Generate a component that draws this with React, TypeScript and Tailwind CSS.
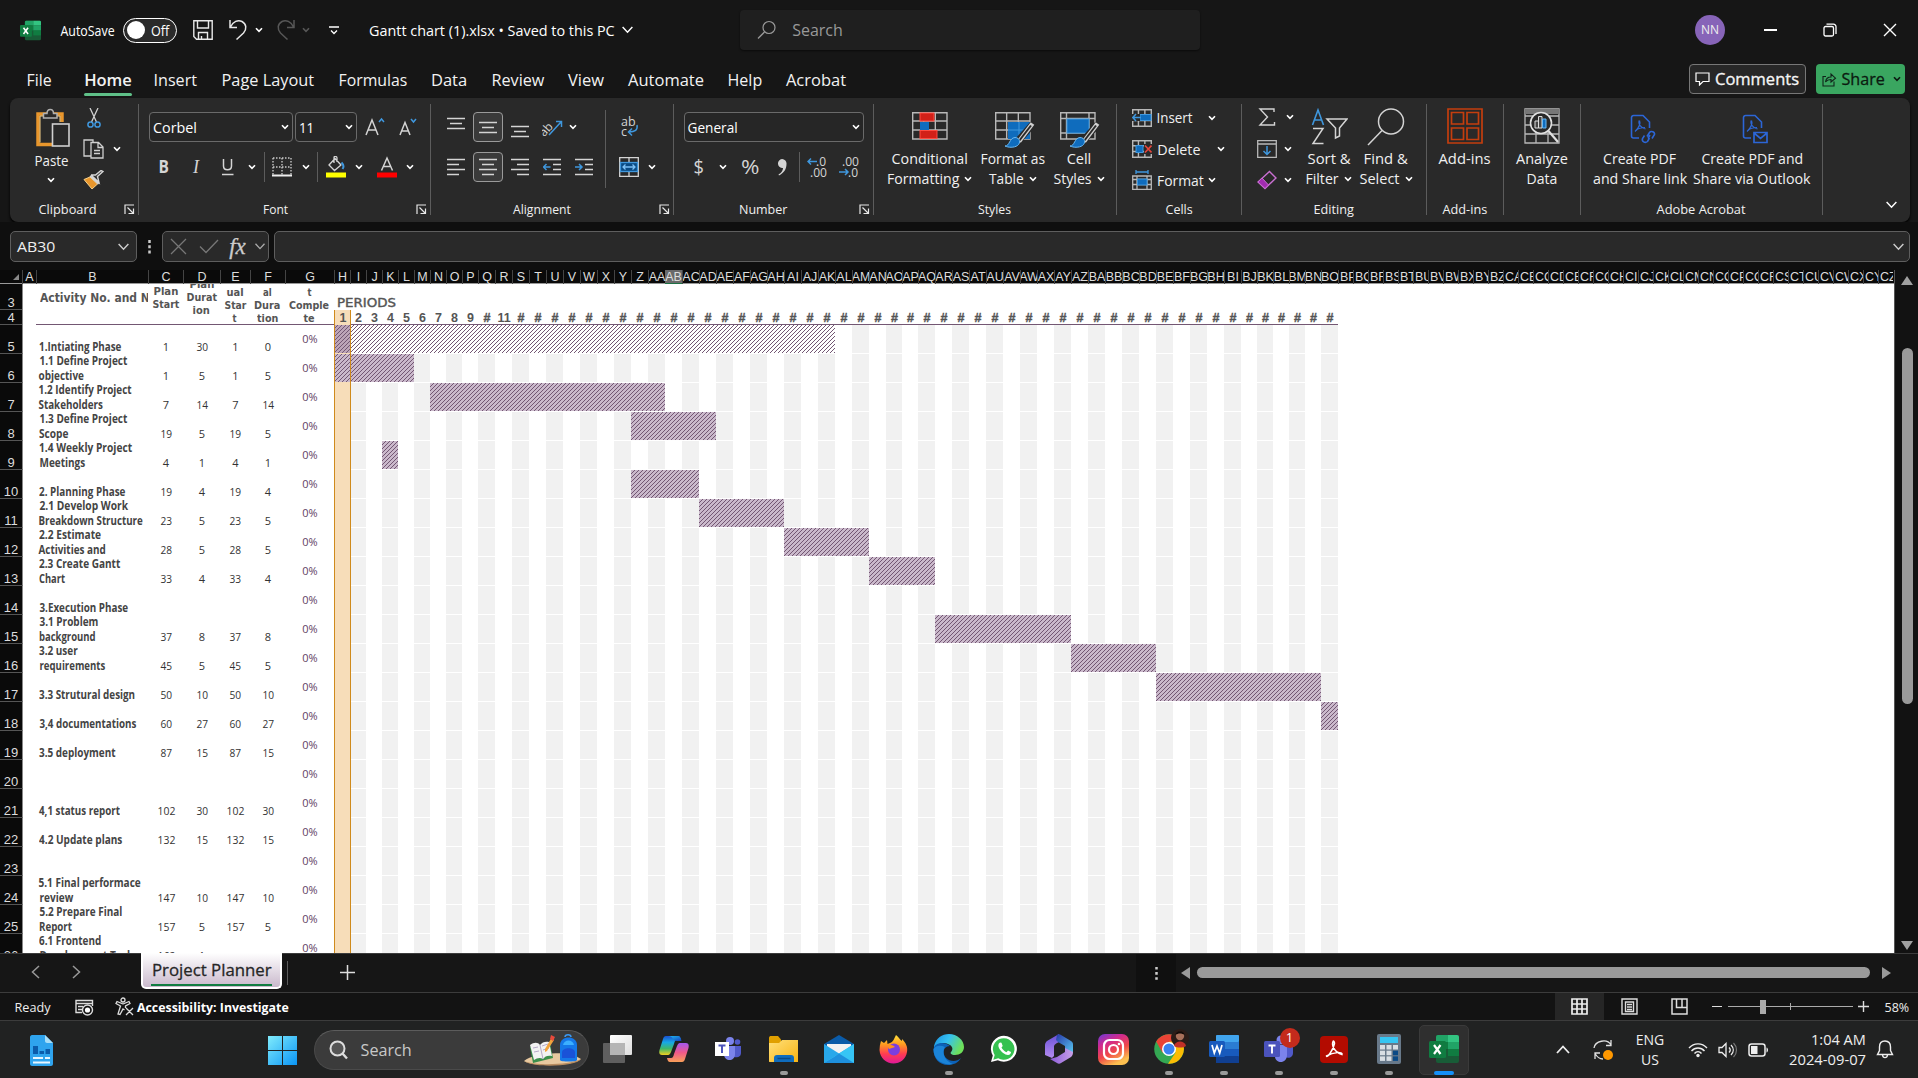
import React, { useLayoutEffect, useRef, useState, type ReactNode } from "react";

/* Text condensed or widened to a fixed advance width. */
function Fit({ w, children, className = "" }: { w: number; children: string; className?: string }) {
  const ref = useRef<HTMLSpanElement>(null);
  const [scale, setScale] = useState(1);
  useLayoutEffect(() => {
    if (ref.current) setScale(w / ref.current.offsetWidth);
  }, [w, children]);
  return (
    <span className={"inline-flex shrink-0 justify-center whitespace-pre " + className} style={{ width: w }}>
      <span ref={ref} className="inline-block shrink-0" style={{ transform: `scaleX(${scale})` }}>
        {children}
      </span>
    </span>
  );
}

function Svg({ w, h, vb, children, className = "" }: { w: number; h: number; vb?: string; children: ReactNode; className?: string }) {
  return (
    <svg width={w} height={h} viewBox={vb ?? `0 0 ${w} ${h}`} fill="none" className={"block shrink-0 " + className}>
      {children}
    </svg>
  );
}

const Chev = ({ c = "#fff", w = 8 }: { c?: string; w?: number }) => (
  <Svg w={w} h={(w * 6) / 8} vb="0 0 8 6">
    <path d="M1 1.2 4 4.4 7 1.2" stroke={c} strokeWidth={w > 8 ? 0.9 : 1.6} />
  </Svg>
);

const Sep = ({ className = "" }: { className?: string }) => <div className={"w-px shrink-0 bg-[#5c5c5c] " + className} />;
const Box = ({ className = "", children }: { className?: string; children?: ReactNode }) => (
  <div className={"flex shrink-0 items-center justify-center " + className}>{children}</div>
);

const Lines = ({ l, w = 18, c = "#d4d4d4" }: { l: [number, number][]; w?: number; c?: string }) => (
  <Svg w={w} h={l.length > 3 ? 18 : 13}>
    {l.map(([a, b], i) => (
      <path key={i} d={`M${a} ${i * 5 + 1.5}H${b}`} stroke={c} strokeWidth="1.4" />
    ))}
  </Svg>
);

const Launcher = () => (
  <Svg w={11} h={11}>
    <path d="M1 10V1H10M3.5 3.5 9 9M9.5 4.5V9.5H4.5" stroke="#e8e8e8" strokeWidth="1.2" />
  </Svg>
);

function ExcelLogo({ w, h }: { w: number; h: number }) {
  return (
    <Svg w={w} h={h} vb="0 0 30 30">
      <rect x="7" y="1" width="23" height="28" rx="2" fill="#185c37" />
      <path d="M9 1h10v7H7V3a2 2 0 0 1 2-2z" fill="#21a366" />
      <path d="M19 1h9a2 2 0 0 1 2 2v5H19z" fill="#33c481" />
      <rect x="7" y="8" width="12" height="7" fill="#107c41" />
      <rect x="19" y="8" width="11" height="7" fill="#21a366" />
      <rect x="19" y="15" width="11" height="7" fill="#107c41" />
      <rect x="0" y="7" width="17" height="17" rx="1.5" fill="#107c41" />
      <path d="M5 11l6.500 9M11.500 11 5 20" stroke="#fff" strokeWidth="2.200" />
    </Svg>
  );
}

/* ---------- Title bar and tabs ---------- */

function TitleBar() {
  return (
    <div className="flex h-[60px] shrink-0 items-center bg-[#161616] pl-5 text-[14px] text-white">
      <ExcelLogo w={21} h={21} />
      <div className="w-5" />
      <Fit w={54} className="text-[14px]">AutoSave</Fit>
      <div className="ml-2 flex h-[25px] w-[54px] items-center rounded-full border border-white bg-[#2a2a2a] pl-[3px]">
        <div className="h-[18px] w-[18px] rounded-full bg-white" />
        <Fit w={18} className="ml-[6px] text-[14px]">Off</Fit>
      </div>
      <Svg w={20} h={20} className="ml-[16px]">
        <path d="M.8.8H19.2V19.2H3.500L.8 16.500zM4.500 1V8H15.500V1M5.500 19V12.500H14.500V19M8.500 19V16" stroke="#e8e8e8" strokeWidth="1.400" />
      </Svg>
      <Svg w={20} h={22} className="ml-[15px]">
        <path d="M2 1V8.500H9M2.500 8C5 2.500 10 .5 14 2.500 18.500 5 19 10 15.500 14L8.500 20.500" stroke="#e8e8e8" strokeWidth="1.500" />
      </Svg>
      <Box className="ml-[3px] w-4"><Chev /></Box>
      <Svg w={20} h={22} className="ml-[9px]">
        <path d="M18 1V8.500H11M17.500 8C15 2.500 10 .5 6 2.500 1.500 5 1 10 4.500 14L11.500 20.500" stroke="#575757" strokeWidth="1.500" />
      </Svg>
      <Box className="ml-[2px] w-4"><Chev c="#575757" /></Box>
      <Box className="ml-[8px] w-6">
        <Svg w={10} h={9}><path d="M0 1H10M2 4.500 5 7.500 8 4.500" stroke="#fff" strokeWidth="1.300" /></Svg>
      </Box>
      <Fit w={246} className="ml-[23px] pt-[2px] text-[14.500px]">Gantt chart (1).xlsx • Saved to this PC</Fit>
      <Box className="ml-1 w-4"><Chev w={13} /></Box>
      <div className="ml-[105px] flex h-10 w-[460px] items-center rounded-[4px] bg-[#1f1f1f] pl-[17px] shadow-[0_1px_2px_#0008]">
        <Svg w={19} h={20}>
          <circle cx="12" cy="7.500" r="6" stroke="#9a9a9a" strokeWidth="1.200" />
          <path d="M7.500 12 1 18.500" stroke="#9a9a9a" strokeWidth="1.300" />
        </Svg>
        <Fit w={51} className="ml-[16px] text-[16px] text-[#999]">Search</Fit>
      </div>
      <div className="grow" />
      <Box className="h-[30px] w-[30px] rounded-full bg-[#8764b8] text-[12px] text-[#eee]">
        <Fit w={18}>NN</Fit>
      </Box>
      <Box className="ml-[15px] w-[60px]"><div className="h-[1.500px] w-[13px] bg-white" /></Box>
      <Box className="w-[60px]">
        <Svg w={14} h={14}>
          <rect x="1" y="3.500" width="9.500" height="9.500" rx="1.500" stroke="#fff" strokeWidth="1.300" />
          <path d="M3.500 1.200H10.500a2.500 2.500 0 0 1 2.500 2.500V11" stroke="#fff" strokeWidth="1.300" />
        </Svg>
      </Box>
      <Box className="mr-[-2px] w-[60px]">
        <Svg w={14} h={14}><path d="M1 1 13 13M13 1 1 13" stroke="#fff" strokeWidth="1.400" /></Svg>
      </Box>
    </div>
  );
}

/* label, width, gap before it */
const tabs: [string, number, number][] = [
  ["File", 25, 27], ["Home", 48, 32], ["Insert", 43, 22], ["Page Layout", 93, 24], ["Formulas", 69, 24],
  ["Data", 36, 24], ["Review", 53, 24], ["View", 36, 24], ["Automate", 76, 24], ["Help", 35, 23], ["Acrobat", 60, 24],
];

function TabBar() {
  return (
    <div className="flex h-[38px] shrink-0 bg-[#161616] text-[16.500px] text-[#f2f2f2]">
      {tabs.map(([t, w, g]) => (
        <div key={t} className="flex h-[36px] flex-col justify-between pt-[8px]" style={{ marginLeft: g }}>
          <Fit w={w} className={"leading-[24px] " + (t === "Home" ? "font-semibold" : "")}>{t}</Fit>
          {t === "Home" && <div className="h-[3px] rounded-full bg-[#5fc088]" />}
        </div>
      ))}
      <div className="grow" />
      <div className="mt-[4px] flex h-[30px] w-[117px] items-center rounded-[4px] border border-[#777] bg-[#272727] pl-[5px]">
        <Svg w={15} h={14}><path d="M1 1H14V9.500H8L4.500 13V9.500H1z" stroke="#fff" strokeWidth="1.200" /></Svg>
        <Fit w={84} className="ml-[5px] text-[16.500px] [-webkit-text-stroke:0.3px_#fff]">Comments</Fit>
      </div>
      <div className="mr-[13px] ml-[10px] mt-[4px] flex h-[30px] w-[89px] items-center rounded-[4px] bg-[#3aa660] pl-[6px] text-[#0b1a10]">
        <Svg w={15} h={15}>
          <path d="M4 4.500H1V14H12V9.500M3.500 10C4 6.500 6.500 5 9 5V2L13.500 6.200 9 10V7.500C7 7.500 5 8 3.500 10z" stroke="#10241a" strokeWidth="1.100" />
        </Svg>
        <Fit w={43} className="ml-[5px] text-[16.500px] [-webkit-text-stroke:0.3px_#0b1a10]">Share</Fit>
        <Box className="ml-[6px] w-3"><Chev c="#0b1a10" /></Box>
      </div>
    </div>
  );
}

/* ---------- Ribbon ---------- */

function Group({ className, label, lw, launcher, tail = "", children }: { className: string; label?: string; lw?: number; launcher?: boolean; tail?: string; children: ReactNode }) {
  return (
    <div className={"flex shrink-0 flex-col " + className}>
      <div className="flex h-[98px] shrink-0">{children}</div>
      <div className={"flex h-[27px] items-center " + tail}>
        <div className="grow" />
        {label && <Fit w={lw ?? 40} className="pt-[2px] text-[13px] text-[#f0f0f0]">{label}</Fit>}
        <div className="grow" />
        {launcher && <Launcher />}
      </div>
    </div>
  );
}

const GSep = () => <Sep className="mt-[6px] h-[111px]" />;

function Big({ className, icon, a, aw, b, bw, chev }: { className: string; icon: ReactNode; a: string; aw: number; b?: string; bw?: number; chev?: boolean }) {
  return (
    <div className={"flex shrink-0 flex-col items-center pt-[10px] text-[14.500px] leading-[20px] text-[#f0f0f0] " + className}>
      <Box className="h-[38px]">{icon}</Box>
      <Fit w={aw} className="mt-[3px]">{a}</Fit>
      {b && (
        <div className="flex items-center gap-[5px]">
          <Fit w={bw ?? 30}>{b}</Fit>
          {chev && <Chev />}
        </div>
      )}
    </div>
  );
}

const Brush = () => (
  <>
    <path d="M38 12 23 29" stroke="#292929" strokeWidth="7" />
    <path d="M37.500 11.500 24 29.500" stroke="#d0d0d0" strokeWidth="4.500" />
    <path d="M36 13.500 24 29" stroke="#292929" strokeWidth="2" />
    <path d="M10 34C15 34 14 26 20 25.500 25 25.500 26 31 22.500 33.500 19 36 13 35.500 10 34z" fill="#0f6cbd" stroke="#6cb8f0" strokeWidth="1" />
  </>
);
const GridLines = ({ w, h }: { w: number; h: number }) => (
  <path
    d={`M.7.700H${w}V${h}H.700zM.7 ${h / 3}H${w}M.7 ${(h * 2) / 3}H${w}M${w / 3} .7V${h}M${(w * 2) / 3} .7V${h}`}
    stroke="#b8b8b8"
    strokeWidth="1.400"
  />
);

function CellRow({ icon, t, w, gap }: { icon: ReactNode; t: string; w: number; gap: string }) {
  return (
    <div className="flex h-8 items-center">
      {icon}
      <Fit w={w} className="ml-[5px] pt-px text-[14.500px] text-[#f0f0f0]">{t}</Fit>
      <Box className={gap}><Chev /></Box>
    </div>
  );
}

function PdfIcon({ link }: { link: boolean }) {
  return (
    <Svg w={26} h={30}>
      <path d="M9 24H3.500a2 2 0 0 1-2-2V3.500a2 2 0 0 1 2-2H13L19.500 8V14" stroke="#2c66d6" strokeWidth="1.600" />
      <path d="M9 6.500C8.500 10 9 12.500 15.500 15M9.500 6.500C11 10 8 14.500 5 17.500M6 16.500C8 14.500 12 13.500 15 13.500" stroke="#2c66d6" strokeWidth="1.200" />
      {link ? (
        <path d="M17 22.500 19.500 18.500C21 16.500 25 18 24.500 20.500L22 24.500M20 21 18 24.500M14.500 21.500 12.500 24.500C11.500 27.500 15 29.500 17.500 27.500L19.500 24" stroke="#2c66d6" strokeWidth="1.600" />
      ) : (
        <path d="M12 18.500H25V28.500H12zM12 19 18.500 24.500 25 19" stroke="#2c66d6" strokeWidth="1.700" />
      )}
    </Svg>
  );
}

const selectBox = "flex h-[30px] shrink-0 items-center rounded-[4px] border border-[#6a6a6a] bg-[#262626] text-[15px] text-white";

function Ribbon() {
  const left: [number, number][] = [[0, 18], [0, 12], [0, 18], [0, 12]];
  const center: [number, number][] = [[0, 18], [3, 15], [0, 18], [3, 15]];
  const right: [number, number][] = [[0, 18], [6, 18], [0, 18], [6, 18]];
  return (
    <div className="flex h-[124px] shrink-0 bg-[#161616] px-[10px] pr-[8px]">
      <div className="flex w-[1900px] overflow-hidden rounded-[8px] bg-[#292929] shadow-[0_2px_3px_#000]">
        <Group className="w-[128px]" label="Clipboard" lw={58} launcher tail="pr-[3px]">
          <div className="flex w-[68px] flex-col items-center pl-[14px] pt-[9px]">
            <Svg w={36} h={40} className="ml-[4px]">
              <path d="M17 37.500H3V7H27V15" stroke="#e8962c" strokeWidth="3.500" />
              <path d="M5 35.500V9H25V15" stroke="#f7d28a" strokeWidth="1" />
              <path d="M8.500 11V6.500H12C12 1 18.500 1 18.500 6.500H22V11z" fill="#292929" stroke="#b0b0b0" strokeWidth="1.500" />
              <rect x="17.500" y="17" width="16.500" height="22" fill="#292929" stroke="#d0d0d0" strokeWidth="1.600" />
            </Svg>
            <Fit w={34} className="mt-[4px] text-[14.500px] leading-[20px] text-[#f0f0f0]">Paste</Fit>
            <div className="mt-[6px]"><Chev /></div>
          </div>
          <div className="flex flex-col pt-[4px] pl-[5px]">
            <div className="flex h-8 items-center pt-[1px] pl-[4px]">
              <Svg w={14} h={21}>
                <path d="M3 0 9.500 14M11 0 4.500 14" stroke="#d0d0d0" strokeWidth="1.300" />
                <circle cx="3.500" cy="16.500" r="2.600" stroke="#3f97dd" strokeWidth="1.500" />
                <circle cx="10.500" cy="16.500" r="2.600" stroke="#3f97dd" strokeWidth="1.500" />
              </Svg>
            </div>
            <div className="flex h-8 items-center gap-[9px]">
              <Svg w={21} h={20}>
                <path d="M8 17H1V1H10V3" stroke="#d0d0d0" strokeWidth="1.300" />
                <path d="M8 3.500H15.500L20 8V19H8zM15 3.500V8.500H20M11 11.500H17M11 14.500H17" stroke="#d0d0d0" strokeWidth="1.300" />
              </Svg>
              <Chev />
            </div>
            <div className="flex h-8 items-center">
              <Svg w={21} h={20}>
                <path d="M1 9.500 9 19 14.500 14 7 7z" fill="#e8962c" stroke="#f7d28a" />
                <path d="M7 6 15.500 14M8 5 16 12.500 14.500 6.500 20 1.500 18 .500 12.500 5 8 5" stroke="#d6d6d6" strokeWidth="1.400" fill="#333" />
              </Svg>
            </div>
          </div>
        </Group>
        <GSep />
        <Group className="w-[291px]" label="Font" lw={25} launcher tail="-ml-[3px] pr-[3px]">
          <div className="flex flex-col gap-[10px] pl-[10px] pt-[14px]">
            <div className="flex items-center">
              <div className={selectBox + " w-[144px] justify-between pl-[3px] pr-[3px]"}><Fit w={44}>Corbel</Fit><Chev /></div>
              <div className={selectBox + " ml-[2px] w-[62px] justify-between pl-[3px] pr-[3px]"}><Fit w={15}>11</Fit><Chev /></div>
              <Svg w={20} h={20} className="ml-[8px]">
                <path d="M1 18 7 3 13 18M3 13H11" stroke="#d4d4d4" strokeWidth="1.500" />
                <path d="M14 5 16.500 2 19 5" stroke="#3f97dd" strokeWidth="1.500" />
              </Svg>
              <Svg w={18} h={20} className="ml-[14px]">
                <path d="M1 18 6 5.500 11 18M3 14H9" stroke="#d4d4d4" strokeWidth="1.500" />
                <path d="M12 2 14.500 5 17 2" stroke="#3f97dd" strokeWidth="1.500" />
              </Svg>
            </div>
            <div className="-ml-px flex h-[30px] items-center text-[17px] text-[#d4d4d4]">
              <Box className="w-8 font-bold"><Fit w={10}>B</Fit></Box>
              <Box className="w-8 font-['Liberation_Serif'] text-[18px] italic">I</Box>
              <Box className="w-[30px]">
                <Svg w={13} h={18}><path d="M2.500 1V8C2.500 13 10.500 13 10.500 8V1M1 16.500H12.500" stroke="#d4d4d4" strokeWidth="1.500" /></Svg>
              </Box>
              <Box className="w-5"><Chev /></Box>
              <Sep className="mx-[2px] h-[30px]" />
              <Box className="ml-[3px] w-6">
                <Svg w={20} h={20}>
                  <path d="M1 1H19M1 10H19M1 1V18M10 1V18M19 1V18" stroke="#c8c8c8" strokeWidth="1.400" strokeDasharray="1.500 1.500" />
                  <path d="M0 18.500H20" stroke="#eee" strokeWidth="2" />
                </Svg>
              </Box>
              <Box className="w-[23px]"><Chev /></Box>
              <Sep className="h-[30px]" />
              <Box className="ml-[6px] w-6">
                <Svg w={20} h={22}>
                  <path d="M3 9 9 2.500 15 9 8.500 14.500zM8 7V1.500C8 0 11 0 11 2V6" stroke="#d4d4d4" strokeWidth="1.300" />
                  <path d="M15.500 6.500C18 9 18 11 16.500 13" stroke="#3f97dd" strokeWidth="2" />
                  <rect y="16.500" width="20" height="5" fill="#ff0" />
                </Svg>
              </Box>
              <Box className="w-[22px]"><Chev /></Box>
              <Box className="ml-[5px] w-6">
                <Svg w={20} h={22}>
                  <path d="M4.500 14.500 10 2 15.500 14.500M6.500 10.500H13.500" stroke="#d4d4d4" strokeWidth="1.500" />
                  <rect y="16.500" width="20" height="5" fill="#f00" />
                </Svg>
              </Box>
              <Box className="w-[22px]"><Chev /></Box>
            </div>
          </div>
        </Group>
        <GSep />
        <Group className="w-[242px]" label="Alignment" lw={58} launcher tail="-ml-[6px] pr-[3px]">
          <div className="flex w-[174px] shrink-0 flex-col gap-[10px] pl-[9px] pt-[14px]">
            <div className="flex h-[30px] items-center">
              <Box className="w-8 pb-[8px]"><Lines l={[[0, 18], [3, 15], [0, 18]]} /></Box>
              <Box className="ml-[1px] h-[30px] w-[30px] rounded-[4px] border border-[#9a9a9a] bg-[#3a3a3a]"><Lines l={[[0, 18], [3, 15], [0, 18]]} /></Box>
              <Box className="ml-[2px] w-[29px] pt-[8px]"><Lines l={[[0, 18], [3, 15], [0, 18]]} /></Box>
              <Box className="ml-[2px] w-[32px] pb-[2px]">
                <Svg w={21} h={20}>
                  <text x="-5" y="13" transform="rotate(-48 8 9)" fontSize="12" fill="#d4d4d4" fontFamily="Open Sans">ab</text>
                  <path d="M7 19 19 6M14 5.500H19.500V11" stroke="#3f97dd" strokeWidth="1.500" />
                </Svg>
              </Box>
              <Box className="-ml-[3px] w-4"><Chev /></Box>
            </div>
            <div className="flex h-[30px] items-center">
              <Box className="w-8"><Lines l={left} /></Box>
              <Box className="ml-[1px] h-[30px] w-[30px] rounded-[4px] border border-[#9a9a9a] bg-[#3a3a3a]"><Lines l={center} /></Box>
              <Box className="ml-[2px] w-[29px]"><Lines l={right} /></Box>
              {[0, 1].map((k) => (
                <Box key={k} className={k ? "w-8" : "ml-[2px] w-8"}>
                  <Svg w={18} h={18}>
                    <path d="M0 1.500H18M10 6.500H18M10 11.500H18M0 16.500H18" stroke="#d4d4d4" strokeWidth="1.400" />
                    <path d={k ? "M0 9H7M4 6 7 9 4 12" : "M7.500 9H.500M3.500 6 .5 9 3.500 12"} stroke="#3f97dd" strokeWidth="1.500" />
                  </Svg>
                </Box>
              ))}
            </div>
          </div>
          <Sep className="mt-[12px] h-[78px]" />
          <div className="flex flex-col gap-[10px] pl-[13px] pt-[14px]">
            <Box className="h-[30px] w-[22px]">
              <Svg w={20} h={22}>
                <text x="1" y="10" fontSize="12.500" fill="#d4d4d4" fontFamily="Open Sans">ab</text>
                <text x="1" y="20" fontSize="12.500" fill="#d4d4d4" fontFamily="Open Sans">c</text>
                <path d="M17 9C18 14 15 16 9 16M12 12.500 8.500 16 12 19.500" stroke="#3f97dd" strokeWidth="1.500" />
              </Svg>
            </Box>
            <div className="flex h-[30px] items-center">
              <Svg w={20} h={20}>
                <path d="M.7.700H19.300V19.300H.700zM10 1V5M10 15V19" stroke="#d4d4d4" strokeWidth="1.300" />
                <rect x="1.500" y="5.500" width="17" height="9" fill="#0a4b84" stroke="#3f97dd" strokeWidth="1.300" />
                <path d="M4 10H16M6.500 7.500 4 10 6.500 12.500M13.500 7.500 16 10 13.500 12.500" stroke="#7cc0f5" strokeWidth="1.300" />
              </Svg>
              <Box className="ml-[3px] w-5"><Chev /></Box>
            </div>
          </div>
        </Group>
        <GSep />
        <Group className="w-[199px]" label="Number" lw={48} launcher tail="-ml-[6px] pr-[3px]">
          <div className="flex flex-col gap-[10px] pl-[10px] pt-[14px]">
            <div className={selectBox + " w-[180px] justify-between pl-[3px] pr-[3px]"}><Fit w={50}>General</Fit><Chev /></div>
            <div className="flex h-[30px] items-center text-[20px] text-[#d4d4d4]">
              <Box className="w-[30px]"><Fit w={10}>$</Fit></Box>
              <Box className="w-[18px]"><Chev /></Box>
              <Box className="ml-[3px] w-[30px]"><Fit w={19}>%</Fit></Box>
              <Box className="ml-[2px] w-[30px]">
                <Svg w={10} h={17}><path d="M5 0A4.500 4.500 0 0 1 9.500 5C9.500 10 7 14 2 16.500L1.500 15.500C5 13.500 6 11 6 9A4.500 4.500 0 1 1 5 0z" fill="#d4d4d4" /></Svg>
              </Box>
              <Sep className="ml-[2px] h-[30px]" />
              {[0, 1].map((k) => (
                <Box key={k} className={k ? "ml-[6px] w-[26px]" : "ml-[4px] w-[26px]"}>
                  <Svg w={20} h={22}>
                    <text x={k ? 3 : 9} y="9.500" fontSize="12.500" fill="#d4d4d4" fontFamily="Open Sans" textLength={k ? 17 : 10} lengthAdjust="spacingAndGlyphs">{k ? ".00" : ".0"}</text>
                    <text x={k ? 9 : 3} y="21" fontSize="12.500" fill="#d4d4d4" fontFamily="Open Sans" textLength={k ? 10 : 17} lengthAdjust="spacingAndGlyphs">{k ? ".0" : ".00"}</text>
                    <path d={k ? "M0 16H9M6 13 9 16 6 19" : "M10 5.500H1M4 2.500 1 5.500 4 8.500"} stroke="#3f97dd" strokeWidth="1.500" />
                  </Svg>
                </Box>
              ))}
            </div>
          </div>
        </Group>
        <GSep />
        <Group className="w-[242px]" label="Styles" lw={33}>
          <Big className="ml-[12px] w-[87px]" a="Conditional" aw={76} b="Formatting" bw={72} chev icon={
            <Svg w={36} h={28} className="mb-[2px] ml-px">
              <GridLines w={35} h={27} />
              <rect x="8" y="1" width="14" height="8" fill="#d22018" stroke="#ff4b40" />
              <rect x="8" y="10" width="9" height="8" fill="#0f6cbd" />
              <rect x="8" y="18.500" width="17" height="8" fill="#d22018" stroke="#ff4b40" />
            </Svg>} />
          <Big className="ml-[3px] w-[74px]" a="Format as" aw={65} b="Table" bw={35} chev icon={
            <Svg w={42} h={36} className="mt-[5px] ml-[6px]">
              <GridLines w={35} h={27} />
              <rect x="13" y="10" width="22" height="17" fill="#0f6cbd" />
              <path d="M13 18H35M24 10V27" stroke="#3f97dd" />
              <Brush />
            </Svg>} />
          <Big className="ml-[2px] w-[54px]" a="Cell" aw={25} b="Styles" bw={38} chev icon={
            <Svg w={42} h={36} className="mt-[5px] ml-[4px]">
              <path d="M.7.700H35V27H.700zM.7 6.500H35M.7 21H35M6.500 .7V27M29 .7V27" stroke="#b8b8b8" strokeWidth="1.400" />
              <rect x="7" y="7" width="22" height="14" fill="#0f6cbd" stroke="#3f97dd" />
              <Brush />
            </Svg>} />
        </Group>
        <GSep />
        <Group className="w-[124px]" label="Cells" lw={27}>
          <div className="flex flex-col pl-[15px] pt-[4px]">
            <CellRow t="Insert" w={36} gap="ml-[11px] w-4" icon={
              <Svg w={20} h={18}>
                <GridLines w={19.300} h={17.300} />
                <rect x="8" y="5.500" width="11" height="6" fill="#0f6cbd" stroke="#3f97dd" />
                <rect x="0" y="5" width="8" height="7" fill="#292929" />
                <path d="M9 8.500H1M4 5 .8 8.500 4 12" stroke="#3f97dd" strokeWidth="1.500" />
              </Svg>} />
            <CellRow t="Delete" w={43.500} gap="ml-[12px] w-4" icon={
              <Svg w={20} h={18}>
                <GridLines w={19.300} h={17.300} />
                <rect x="12" y="4" width="8" height="10" fill="#292929" />
                <rect x="4" y="5.500" width="7" height="7" fill="#0f6cbd" stroke="#3f97dd" />
                <path d="M13 5.500 19.500 12.500M19.500 5.500 13 12.500" stroke="#e8453c" strokeWidth="1.600" />
              </Svg>} />
            <CellRow t="Format" w={47} gap="w-4" icon={
              <Svg w={20} h={20}>
                <path d="M.7 6H19.300V19.300H.700zM.7 14.500H19.300M5 6V19M15 6V19M.7 9.500H19.300" stroke="#b8b8b8" strokeWidth="1.300" />
                <rect x="5.500" y="9" width="9.500" height="6" fill="#0f6cbd" stroke="#3f97dd" />
                <path d="M4 2H16M4 0V4M16 0V4" stroke="#3f97dd" strokeWidth="1.300" />
              </Svg>} />
          </div>
        </Group>
        <GSep />
        <Group className="w-[184px]" label="Editing" lw={40}>
          <div className="flex w-[54px] flex-col pl-[15px] pt-[3px]">
            <div className="flex h-8 items-center">
              <Svg w={20} h={18}><path d="M17 4V1H3L10.500 9 3 17H17.500V14" stroke="#d4d4d4" strokeWidth="1.400" /></Svg>
              <Box className="ml-[5px] w-4"><Chev /></Box>
            </div>
            <div className="flex h-8 items-center">
              <Svg w={20} h={18}>
                <path d="M.7.700H19.300V17.300H.700zM.7 4H19.300" stroke="#b8b8b8" strokeWidth="1.300" />
                <path d="M10 6V14.500M6.500 11 10 14.500 13.500 11" stroke="#3f97dd" strokeWidth="1.500" />
              </Svg>
              <Box className="ml-[3px] w-4"><Chev /></Box>
            </div>
            <div className="flex h-8 items-center">
              <Svg w={20} h={20}>
                <path d="M12.500 1.500 19 8 8 18.500 1 12z" stroke="#c86fd0" strokeWidth="1.400" />
                <path d="M1 12 5 8 11.500 15 8 18.500z" fill="#a12bb0" stroke="#c86fd0" />
              </Svg>
              <Box className="ml-[3px] w-4"><Chev /></Box>
            </div>
          </div>
          <Big className="ml-[6px] w-[54px]" a="Sort &" aw={43} b="Filter" bw={33} chev icon={
            <Svg w={37} h={38}>
              <path d="M1.500 17 7 2 12.500 17M3.500 12H10.500" stroke="#3f97dd" strokeWidth="1.600" />
              <path d="M2 20.500H12L2 35.500H12.500" stroke="#d4d4d4" strokeWidth="1.500" />
              <path d="M16 11H36L28.500 20V28L24.500 30V20z" stroke="#d4d4d4" strokeWidth="1.500" />
            </Svg>} />
          <Big className="ml-[1px] w-[58px]" a="Find &" aw={44} b="Select" bw={40} chev icon={
            <Svg w={38} h={38}>
              <circle cx="24" cy="13.500" r="12.500" stroke="#d4d4d4" strokeWidth="1.500" />
              <path d="M15 22.500 1 37" stroke="#d4d4d4" strokeWidth="1.500" />
            </Svg>} />
        </Group>
        <GSep />
        <Group className="w-[76px]" label="Add-ins" lw={45}>
          <Big className="w-[76px]" a="Add-ins" aw={52} icon={
            <Svg w={36} h={36} className="mb-[2px]">
              <path d="M1 1H35V35H1zM4.500 4.500H16.500V16H4.500zM20 4.500H31.500V16H20zM4.500 20H16.500V31.500H4.500zM20 20H31.500V31.500H20z" stroke="#c43e0e" strokeWidth="1.700" />
            </Svg>} />
        </Group>
        <GSep />
        <Group className="w-[76px]">
          <Big className="w-[76px]" a="Analyze" aw={52} b="Data" bw={31} icon={
            <Svg w={36} h={36} className="mb-[2px]">
              <path d="M1 1H35V35H1zM1 8H35M1 17H35M1 26H35M12 8V35M24 8V35" stroke="#b8b8b8" strokeWidth="1.300" />
              <rect x="1" y="1" width="34" height="5" fill="#777" />
              <circle cx="17" cy="15" r="10.500" fill="#292929" stroke="#e0e0e0" strokeWidth="1.600" />
              <path d="M24.500 23 34 34" stroke="#e0e0e0" strokeWidth="2.200" />
              <path d="M11 20V13H14.500V20zM14.500 20V8.500H18V20z" fill="#444" stroke="#ddd" />
              <path d="M18.500 20V11H22V20z" fill="#0f6cbd" stroke="#6cb8f0" />
            </Svg>} />
        </Group>
        <GSep />
        <Group className="w-[241px]" label="Adobe Acrobat" lw={89}>
          <Big className="ml-[11px] w-[96px]" a="Create PDF" aw={73} b="and Share link" bw={94} icon={<div className="pt-[3px] pl-[5px]"><PdfIcon link /></div>} />
          <Big className="ml-[4px] w-[120px]" a="Create PDF and" aw={102} b="Share via Outlook" bw={118} icon={<div className="pt-[3px] pl-[6px]"><PdfIcon link={false} /></div>} />
        </Group>
        <GSep />
        <div className="flex grow items-end justify-end pr-[12px] pb-[12px]"><Chev w={13} /></div>
      </div>
    </div>
  );
}

function FormulaBar() {
  const box = "flex h-[31px] items-center rounded-[5px] border border-[#5e5e5e] bg-[#292929]";
  return (
    <div className="flex h-[48px] shrink-0 bg-[#0f0f0f] pt-[9px] pl-[10px]">
      <div className={box + " w-[127px] justify-between pl-[6px] pr-[6px] text-[15px] text-[#eee]"}>
        <Fit w={38}>AB30</Fit><Chev w={13} c="#ccc" />
      </div>
      <Box className="h-[31px] w-[25px]">
        <Svg w={3} h={14}><path d="M1.500 0V14" stroke="#ccc" strokeWidth="2.500" strokeDasharray="3 2.300" /></Svg>
      </Box>
      <div className={box + " w-[107px]"}>
        <Svg w={17} h={17} className="ml-[7px]"><path d="M1 1 16 16M16 1 1 16" stroke="#777" strokeWidth="1.300" /></Svg>
        <Svg w={20} h={15} className="ml-[12px]"><path d="M1 7.500 7 13.500 19 1" stroke="#777" strokeWidth="1.300" /></Svg>
        <span className="ml-[10px] w-[20px] font-['Liberation_Serif'] text-[23px] leading-none text-[#ccc] italic [-webkit-text-stroke:0.3px_#ccc]"><Fit w={17}>fx</Fit></span>
        <div className="ml-[5px]"><Chev w={12} c="#aaa" /></div>
      </div>
      <div className={box + " ml-[5px] w-[1636px] justify-end pr-[4px]"}><Chev w={13} c="#ccc" /></div>
    </div>
  );
}

/* ---------- Worksheet ---------- */

const fixedCols = [14, 112, 35, 37, 30, 35, 49];
/* Period column edges follow the zoomed column widths of the sheet. */
const periodEdges: number[] = (() => {
  const e = [334];
  for (let i = 0; i < 9; i++) e.push(e[i] + 16);
  while (e[e.length - 1] < 886) e.push(e[e.length - 1] + 17);
  e[e.length - 1] = 886;
  e.push(902, 918, 935);
  while (e[e.length - 1] < 1241) e.push(e[e.length - 1] + 17);
  e.push(1257, 1273, 1289, 1305, 1321, 1338);
  return e;
})();
const periodWidths = periodEdges.slice(1).map((x, i) => x - periodEdges[i]);
const allWidths: number[] = [...fixedCols, ...periodWidths, ...Array(37).fill(15)];
const template = [...fixedCols, ...periodWidths].map((w) => w + "px").join(" ");

function colName(i: number): string {
  return i < 26 ? String.fromCharCode(65 + i) : colName(Math.floor(i / 26) - 1) + String.fromCharCode(65 + (i % 26));
}

type Task = { n: number; lines: string[]; lw: number[]; v: string[]; bar?: [number, number] };
const tasks: Task[] = [
  { n: 5, lines: ["1.Intiating Phase"], lw: [82], v: ["1", "30", "1", "0"], bar: [1, 30] },
  { n: 6, lines: ["1.1 Define Project", "objective"], lw: [88, 45], v: ["1", "5", "1", "5"], bar: [1, 5] },
  { n: 7, lines: ["1.2 Identify Project", "Stakeholders"], lw: [93, 64], v: ["7", "14", "7", "14"], bar: [7, 20] },
  { n: 8, lines: ["1.3 Define Project", "Scope"], lw: [88, 29], v: ["19", "5", "19", "5"], bar: [19, 23] },
  { n: 9, lines: ["1.4 Weekly Project", "Meetings"], lw: [93, 46], v: ["4", "1", "4", "1"], bar: [4, 4] },
  { n: 10, lines: ["2. Planning Phase"], lw: [86], v: ["19", "4", "19", "4"], bar: [19, 22] },
  { n: 11, lines: ["2.1 Develop Work", "Breakdown Structure"], lw: [89, 104], v: ["23", "5", "23", "5"], bar: [23, 27] },
  { n: 12, lines: ["2.2 Estimate", "Activities and"], lw: [62, 67], v: ["28", "5", "28", "5"], bar: [28, 32] },
  { n: 13, lines: ["2.3 Create Gantt", "Chart"], lw: [81, 26], v: ["33", "4", "33", "4"], bar: [33, 36] },
  { n: 14, lines: ["3.Execution Phase"], lw: [89], v: [] },
  { n: 15, lines: ["3.1 Problem", "background"], lw: [59, 57], v: ["37", "8", "37", "8"], bar: [37, 44] },
  { n: 16, lines: ["3.2 user", "requirements"], lw: [39, 66], v: ["45", "5", "45", "5"], bar: [45, 49] },
  { n: 17, lines: ["3.3 Strutural design"], lw: [96], v: ["50", "10", "50", "10"], bar: [50, 59] },
  { n: 18, lines: ["3,4 documentations"], lw: [97], v: ["60", "27", "60", "27"], bar: [60, 60] },
  { n: 19, lines: ["3.5 deployment"], lw: [77], v: ["87", "15", "87", "15"] },
  { n: 20, lines: [], lw: [], v: [] },
  { n: 21, lines: ["4,1 status report"], lw: [81], v: ["102", "30", "102", "30"] },
  { n: 22, lines: ["4.2 Update plans"], lw: [83], v: ["132", "15", "132", "15"] },
  { n: 23, lines: [], lw: [], v: [] },
  { n: 24, lines: ["5.1 Final performace", "review"], lw: [102, 34], v: ["147", "10", "147", "10"] },
  { n: 25, lines: ["5.2 Prepare Final", "Report"], lw: [83, 33], v: ["157", "5", "157", "5"] },
  { n: 26, lines: ["6.1 Frontend", "Development Task"], lw: [62, 94], v: ["162", "1"] },
];

function Hatch({ id, bg }: { id: string; bg: string }) {
  return (
    <svg width="100%" height="28" className="block" shapeRendering="crispEdges">
      <defs>
        <pattern id={id} width="4" height="4" patternUnits="userSpaceOnUse">
          <rect width="4" height="4" fill={bg} />
          <path d="M3 0h1v1h-1zM2 1h1v1h-1zM1 2h1v1h-1zM0 3h1v1h-1z" fill="#735773" />
        </pattern>
      </defs>
      <rect width="100%" height="28" fill={`url(#${id})`} />
    </svg>
  );
}

function HeadCell({ w, lines }: { w: string; lines: [string, number][] }) {
  return (
    <div className={"flex shrink-0 flex-col items-center justify-center overflow-hidden " + w}>
      {lines.map(([t, tw], i) => (
        <Fit key={i} w={tw} className="h-[13px] shrink-0 leading-[13px]">{t}</Fit>
      ))}
    </div>
  );
}

function TaskRow({ t }: { t: Task }) {
  const cell = (c: number, span = 1) => ({ gridColumn: `${c} / span ${span}`, gridRow: 1 });
  return (
    <div className="flex h-[29px] shrink-0">
      <div className="flex w-[23px] shrink-0 items-end justify-center border-r border-b border-r-[#888] border-b-[#555] bg-[#0a0a0a] font-['Liberation_Sans'] text-[13px] leading-[12px] text-[#ddd]">{t.n}</div>
      <div className="-ml-px grid h-[29px] shrink-0 grid-rows-[29px]" style={{ gridTemplateColumns: template }}>
        <div className="flex flex-col items-start justify-end pl-[3px] text-[11.500px] leading-[14.500px] font-bold text-[#444]" style={cell(2)}>
          {t.lines.map((l, i) => <Fit key={i} w={t.lw[i]}>{l}</Fit>)}
        </div>
        {t.v.map((v, i) => (
          <div key={i} className="flex items-end justify-center pl-px text-[11px] leading-[14px] text-[#333]" style={cell(3 + i)}>
            <Fit w={v.length * 6}>{v}</Fit>
          </div>
        ))}
        <div className="flex items-center justify-center pb-[2px] pl-px text-[11px] leading-none text-[#5f4263]" style={cell(7)}>
          <Fit w={15}>0%</Fit>
        </div>
        {periodWidths.map((_, i) => i % 2 === 1 && <div key={i} className="h-[28px] bg-[#f1f1f1]" style={cell(8 + i)} />)}
        <div className="bg-[#f7ddb9]" style={cell(8)} />
        {t.bar && t.n === 5 && (
          <>
            <div className="h-[28px]" style={cell(8)}><Hatch id="hatch-now" bg="#bda5b8" /></div>
            <div className="h-[28px]" style={cell(9, 29)}><Hatch id="hatch-plan" bg="#ffffff" /></div>
          </>
        )}
        {t.bar && t.n !== 5 && (
          <div className="h-[28px]" style={cell(7 + t.bar[0], t.bar[1] - t.bar[0] + 1)}><Hatch id={"hatch-" + t.n} bg="#cab9cb" /></div>
        )}
        <div className="-mr-px border-x border-[#cf8a1c]" style={cell(8)} />
      </div>
    </div>
  );
}

function Sheet() {
  return (
    <div className="flex h-[683px] shrink-0 bg-[#121212]">
      <div className="flex w-[1895px] shrink-0 flex-col overflow-hidden border-r border-[#555] bg-white">
        <div className="flex h-[14px] shrink-0 border-b border-[#999] bg-[#0a0a0a] font-['Liberation_Sans'] text-[12.500px] text-[#ddd]">
          <div className="flex w-[22px] shrink-0 items-end justify-end pr-[3px] pb-[3px]">
            <Svg w={6} h={6}><path d="M6 0V6H0z" fill="#888" /></Svg>
          </div>
          {allWidths.map((w, i) => {
            const n = colName(i);
            return (
              <div
                key={i}
                className={"flex h-[14px] shrink-0 overflow-hidden leading-[14px] " + (n === "AB" ? "border-b border-[#1e7145] bg-[#6a6a6a]" : "border-l border-[#444]") + (i >= 67 ? " justify-start pl-px" : " justify-center")}
                style={{ width: w }}
              >
                <span className="shrink-0 whitespace-nowrap">{n}</span>
              </div>
            );
          })}
        </div>
        <div className="flex h-[41px] shrink-0 font-['DejaVu_Sans'] text-[10.500px] font-bold text-[#555]">
          <div className="flex w-[23px] shrink-0 flex-col border-r border-[#888] bg-[#0a0a0a] font-['Liberation_Sans'] text-[13px] font-normal text-[#ddd]">
            <div className="flex h-[26px] items-end justify-center border-b border-[#555] leading-[12px]">3</div>
            <div className="flex h-[15px] items-end justify-center border-b border-[#555] leading-[13px]">4</div>
          </div>
          <div className="ml-[13px] flex h-[41px] border-b border-[#735773]">
            <div className="w-[112px] overflow-hidden pt-[7px] pl-[4px] text-[11.500px] leading-[14px]"><Fit w={117}>Activity No. and Na</Fit></div>
            <HeadCell w="w-[35px] pb-[12px]" lines={[["Plan", 25], ["Start", 27]]} />
            <HeadCell w="w-[37px] pb-[14px]" lines={[["Plan", 25], ["Durat", 30], ["ion", 17]]} />
            <HeadCell w="w-[30px] pt-[2px]" lines={[["ual", 17], ["Star", 22], ["t", 4]]} />
            <HeadCell w="w-[35px] pt-[2px]" lines={[["al", 9], ["Dura", 26], ["tion", 21]]} />
            <HeadCell w="w-[49px] pt-[2px]" lines={[["t", 4], ["Comple", 40], ["te", 11]]} />
            <div className="flex flex-col">
              <div className="h-[26px] pt-[12px] pl-[3px] text-[12px] leading-[14px]"><Fit w={59} className="font-normal [-webkit-text-stroke:0.4px_#555]">PERIODS</Fit></div>
              <div className="flex h-[15px] font-['Liberation_Sans'] text-[12.500px] leading-[16px]">
                {periodWidths.map((w, i) => (
                  <div key={i} className={"flex shrink-0 justify-center pl-px " + (i === 0 ? "relative -mr-px border-x border-[#cf8a1c] bg-[#f7ddb9]" : "") + (i < 9 || i === 10 ? "" : " [-webkit-text-stroke:0.4px_#555]")} style={{ width: i === 0 ? 17 : w }}>
                    {i < 9 || i === 10 ? i + 1 : "#"}
                  </div>
                ))}
              </div>
            </div>
          </div>
        </div>
        {tasks.map((t) => <TaskRow key={t.n} t={t} />)}
      </div>
      <div className="flex w-[23px] flex-col items-center pt-[6px] pl-px">
        <Svg w={12} h={9}><path d="M6 0 12 9H0z" fill="#a0a0a0" /></Svg>
        <div className="mt-[63px] h-[356px] w-[11px] rounded-full bg-[#9a9a9a]" />
        <div className="grow" />
        <Svg w={12} h={9} className="mb-[3px]"><path d="M6 9 0 0H12z" fill="#a0a0a0" /></Svg>
      </div>
    </div>
  );
}

function SheetTabs() {
  return (
    <div className="flex h-[40px] shrink-0 border-y border-t-[#3c3c3c] border-b-[#3c3c3c] bg-[#161616]">
      <Box className="ml-[25px] w-5 pb-[2px]"><Svg w={9} h={14}><path d="M8 1 1.500 7 8 13" stroke="#999" strokeWidth="1.500" /></Svg></Box>
      <Box className="ml-[21px] w-5 pb-[2px]"><Svg w={9} h={14}><path d="M1 1 7.500 7 1 13" stroke="#999" strokeWidth="1.500" /></Svg></Box>
      <div className="-mt-px ml-[55px] flex h-[36px] w-[141px] flex-col items-center rounded-b-[5px] border-2 border-t-0 border-white bg-linear-to-b from-white to-[#c9b9cc] pt-[4px] text-[16.500px] leading-[25px] text-[#262626]">
        <Fit w={120} className="[-webkit-text-stroke:0.3px_#262626]">Project Planner</Fit>
        <div className="mt-[2px] h-[2px] w-[121px] bg-[#107c41]" />
      </div>
      <Sep className="mt-[7px] ml-[5px] h-[24px]" />
      <Box className="ml-[49px] w-5 pb-[2px]"><Svg w={15} h={15}><path d="M7.500 0V15M0 7.500H15" stroke="#ddd" strokeWidth="1.500" /></Svg></Box>
      <div className="grow" />
      <Box className="w-[40px] bg-[#101010]"><Svg w={3} h={13}><path d="M1.500 0V13" stroke="#ccc" strokeWidth="2.500" strokeDasharray="2.600 2.500" /></Svg></Box>
      <div className="flex w-[742px] items-center pb-px pl-[5px]">
        <Svg w={10} h={12}><path d="M9 0V12L0 6z" fill="#9a9a9a" /></Svg>
        <div className="ml-[6px] h-[11px] w-[673px] rounded-full bg-[#9a9a9a]" />
        <Svg w={10} h={12} className="ml-[12px]"><path d="M0 0V12L9 6z" fill="#9a9a9a" /></Svg>
      </div>
    </div>
  );
}

function StatusBar() {
  return (
    <div className="flex h-[28px] shrink-0 items-center border-b border-[#3c3c3c] bg-[#131313] text-[13px] text-[#eee]">
      <Fit w={36} className="ml-[14px] pt-[2px]">Ready</Fit>
      <Svg w={19} h={17} className="mt-[2px] ml-[25px]">
        <path d="M17.500 7V1.500H1V13.500H7M1 4.500H17.500M3 7.500H8M3 10.500H7" stroke="#ddd" strokeWidth="1.400" />
        <circle cx="12.500" cy="11" r="5" stroke="#ddd" strokeWidth="1.400" /><circle cx="12.500" cy="11" r="2.600" fill="#fff" />
      </Svg>
      <Svg w={19} h={19} className="ml-[21px]">
        <circle cx="8" cy="3" r="2" stroke="#ddd" strokeWidth="1.300" />
        <path d="M8 7 2 4.500 1 6.500 5.500 9 3 17 5 17.500 8 12 9.500 13M8 7 14 4.500 15 6.500 10.500 9V11M11 11 18 18M18 11 11 18" stroke="#ddd" strokeWidth="1.300" />
      </Svg>
      <Fit w={152} className="ml-[3px] pt-[2px] font-bold text-white">Accessibility: Investigate</Fit>
      <div className="grow" />
      <Box className="h-[27px] w-[49px] bg-[#262626]">
        <Svg w={17} h={17}><path d="M1 1H16V16H1zM6 1V16M11 1V16M1 6H16M1 11H16" stroke="#eee" strokeWidth="1.700" /></Svg>
      </Box>
      <Box className="w-[50px]"><Svg w={17} h={17}><path d="M1 1H16V16H1zM4.500 4H12.500V13.500H4.500zM6 6.500H11M6 9H11M6 11.500H11" stroke="#ddd" strokeWidth="1.400" /></Svg></Box>
      <Box className="w-[50px]"><Svg w={17} h={17}><path d="M1 1H16V16H1zM5.500 1V9.500H11V1M11 9.500H16" stroke="#ddd" strokeWidth="1.500" /></Svg></Box>
      <Box className="ml-[2px] w-[22px]"><div className="h-[1.500px] w-[10px] bg-[#ddd]" /></Box>
      <div className="flex w-[125px] shrink-0 items-center">
        <div className="h-px w-[32px] bg-[#aaa]" /><div className="h-[14px] w-[6px] bg-[#aaa]" /><div className="h-px w-[24px] bg-[#aaa]" />
        <div className="h-[7px] w-px bg-[#aaa]" /><div className="h-px w-[62px] bg-[#aaa]" />
      </div>
      <Box className="w-[21px]"><Svg w={11} h={11}><path d="M5.500 0V11M0 5.500H11" stroke="#ddd" strokeWidth="1.400" /></Svg></Box>
      <Fit w={25} className="mr-[9px] ml-[10px] pt-[2px]">58%</Fit>
    </div>
  );
}

/* ---------- Taskbar ---------- */

const Grad = ({ id, stops, x2 = 1, y2 = 1 }: { id: string; stops: string[]; x2?: number; y2?: number }) => (
  <linearGradient id={id} x1="0" y1="0" x2={x2} y2={y2}>
    {stops.map((s, i) => <stop key={i} offset={i / (stops.length - 1)} stopColor={s} />)}
  </linearGradient>
);

const icons: { icon: ReactNode; run?: boolean; active?: boolean }[] = [
  { icon: <Svg w={30} h={28} className="-ml-[2px]"><defs><Grad id="tv" stops={["#fff", "#ddd"]} /></defs><rect x="7" width="22" height="20" rx="1" fill="url(#tv)" /><rect y="8" width="22" height="20" rx="1" fill="#666" fillOpacity=".9" /><rect x="7" y="8" width="15" height="12" fill="#b5b5b5" /></Svg> },
  { icon: <Svg w={30} h={28}>
      <defs><Grad id="cp1" x2={0} stops={["#1b4fd0", "#16a8e8", "#3fb868", "#f3cf20"]} /><Grad id="cp2" x2={0} stops={["#a458f0", "#f0588a", "#f8a058"]} /><Grad id="cp3" stops={["#20c0f0", "#1440c0"]} /></defs>
      <path d="M7 1H19C21 1 21.500 3 22 5L18 5C16 5 15.500 7 15 9L12 17C11 19.500 10 20 8 20H3C0 20 0 17 .5 15L4 4C4.500 2 5.500 1 7 1z" fill="url(#cp1)" />
      <path d="M9 1H19C21 1 22 3 22.500 6H18C16 6 15 5 14 4 13 2 12 1 9 1z" fill="url(#cp3)" />
      <path d="M23 27H11C9 27 8.500 25 8 23H12C14 23 14.500 21 15 19L18 11C19 8.500 20 8 22 8H27C30 8 30 11 29.500 13L26 24C25.500 26 24.500 27 23 27z" fill="url(#cp2)" />
    </Svg> },
  { icon: <Svg w={27} h={27}>
      <circle cx="15" cy="5" r="4" fill="#7b83eb" /><circle cx="22.500" cy="6" r="2.800" fill="#5059c9" />
      <path d="M18 10H26V17C26 21 22 22 19 21z" fill="#5059c9" /><path d="M9 10H20V18C20 26 9 26 9 18z" fill="#7b83eb" />
      <rect x="0" y="6" width="14" height="14" fill="#fff" /><path d="M3.500 9.500H10.500M7 9.500V17" stroke="#4b53bc" strokeWidth="2" />
    </Svg> },
  { run: true, icon: <Svg w={30} h={28}>
      <defs><Grad id="fo" stops={["#ffe07a", "#f8b414"]} /></defs>
      <path d="M0 3C0 1.500 1 1 2 1H9L12 4.500V9H0z" fill="#e0a000" /><path d="M0 8H10L13 5H29V27H1C0 27 0 26.500 0 26z" fill="url(#fo)" />
      <path d="M5 27V23C5 21 6 20 8 20H22C24 20 25 21 25 23V27z" fill="#0f6cbd" /><path d="M8.500 23.500H21.500" stroke="#0a4a86" strokeWidth="1.500" />
    </Svg> },
  { icon: <Svg w={30} h={28}>
      <path d="M0 9 15 0 30 9V20H0z" fill="#0a5ba8" /><path d="M3 9H27V20H3z" fill="#f2f2f2" /><path d="M0 9 15 18.500 30 9V28H0z" fill="#28a8ea" /><path d="M0 28 15 18.500 30 9V28z" fill="#36c5f5" /><path d="M10 22 15 18.500 30 28H0z" fill="#1e90dd" />
    </Svg> },
  { icon: <Svg w={29} h={29}>
      <defs><Grad id="ff" x2={0} stops={["#ffe13a", "#ff9a20", "#ff3c50", "#e0189a"]} /></defs>
      <path d="M2 6 5 8 8 5 8.500 9 11 8C14 7 15 4 17 0 20 2 21 5 23 6L23 4C27 8 29 12 28 17 27 24 21 28.500 14.500 28.500 7 28.500 1 23 .5 15 .5 12 1 9 2 6z" fill="url(#ff)" />
      <circle cx="15" cy="14.500" r="6" fill="#7a3ee0" /><path d="M8 10C12 9 15 11 16 12L10 14z" fill="#ff9020" />
    </Svg> },
  { run: true, icon: <Svg w={31} h={31}>
      <defs><Grad id="ed" x2={1} y2={0.4} stops={["#1a8fe0", "#35c1f1", "#6de05a"]} /></defs>
      <path d="M1 12C3 4 9 0 16 0 24 0 31 6 31 13 31 18 27 21 22 21 18 21 17 19 18 18 20 16 20 13 17 11 11 7 4 9 1 15z" fill="url(#ed)" />
      <path d="M1 13C4 8 12 8 17 12 10 12 9 20 13 24 17 28 24 28 28 24 25 29 20 31 15 31 5 31-1 22 1 13z" fill="#0c62b8" />
      <path d="M12 13C9 17 10 26 20 30 8 32 0 24 .5 15 3 11 8 11 12 13z" fill="#1b84d8" />
    </Svg> },
  { icon: <Svg w={28} h={28}>
      <path d="M1 27 2.800 20.500A13 13 0 1 1 7.800 25.200z" fill="#fff" /><path d="M3.300 24.700 4.700 20A10.800 10.800 0 1 1 8.200 23.300z" fill="#35c14f" />
      <path d="M10 7.500C8 8.500 8 11 9 13 11 17 15 20 18 20 20 20 21 18.500 21 17L18 15.500 16.500 17.200C14.500 16.500 12.500 14.500 11.500 12.500L12.700 11 11.500 7.800z" fill="#fff" />
    </Svg> },
  { icon: <Svg w={28} h={30}>
      <defs><Grad id="m1" stops={["#6a50d8", "#b48cf0"]} x2={0} /><Grad id="m2" stops={["#2838a8", "#58c8f0"]} /><Grad id="m3" x2={1} y2={0} stops={["#8a5ad8", "#c8a0e8"]} /></defs>
      <path d="M14 0 2 7C1 8 0 9 0 11V21L7 24 9 22V13C9 11 10 10 14 8z" fill="url(#m1)" /><path d="M12 1C13 0 15 0 16 1L26 7C28 8 28 10 28 11V19L20 15V12L13 8 11 6z" fill="url(#m2)" />
      <path d="M28 18C28 21 27 22 26 23L16 29C15 30 13 30 12 29L5 25 12 23 20 18V14z" fill="url(#m3)" />
    </Svg> },
  { icon: <Svg w={31} h={31}>
      <defs><Grad id="ig" x2={0.5} y2={1} stops={["#6a3ad8", "#d02a90", "#f04848", "#fcc050"]} /></defs>
      <rect width="31" height="31" rx="7" fill="url(#ig)" /><rect x="6" y="6" width="19" height="19" rx="5.500" stroke="#fff" strokeWidth="2.200" /><circle cx="15.500" cy="15.500" r="4.500" stroke="#fff" strokeWidth="2.200" /><circle cx="21" cy="10" r="1.300" fill="#fff" />
    </Svg> },
  { run: true, icon: <div className="relative">
      <Svg w={30} h={30}>
        <circle cx="15" cy="15" r="14.800" fill="#34a853" /><path d="M2.200 7.600A14.800 14.800 0 0 1 27.800 7.600L15 8 8.500 18.700z" fill="#ea4335" /><path d="M27.800 7.600A14.800 14.800 0 0 1 14 29.800L21.500 18.700 15 7.600z" fill="#fbbc04" />
        <circle cx="15" cy="15" r="7" fill="#fff" /><circle cx="15" cy="15" r="5.500" fill="#3b82f0" />
      </Svg>
      <Svg w={18} h={20} className="absolute -top-[6px] left-[17px]">
        <circle cx="9" cy="10" r="9" fill="#2c1d18" /><circle cx="9" cy="8" r="4.200" fill="#a8705a" /><path d="M3 18C4 12 14 12 15 18 12 20 6 20 3 18z" fill="#c03028" /><path d="M4.500 7C5 2 13 2 13.500 7 11 5 7 5 4.500 7z" fill="#120a08" />
      </Svg>
    </div> },
  { run: true, icon: <Svg w={30} h={28}>
      <rect x="7" width="23" height="28" rx="1.500" fill="#185abd" /><rect x="7" width="23" height="7" rx="1" fill="#41a5ee" /><rect x="7" y="7" width="23" height="7" fill="#2b7cd3" /><rect x="7" y="21" width="23" height="7" rx="1" fill="#103f91" />
      <rect y="6" width="16" height="16" rx="1.500" fill="#185abd" /><path d="M3 10 5.300 18 8 11 10.700 18 13 10" stroke="#fff" strokeWidth="1.700" />
    </Svg> },
  { run: true, icon: <div className="relative">
      <Svg w={30} h={28}>
        <circle cx="17" cy="5" r="4.500" fill="#7b83eb" /><path d="M20 9H29V18C29 22 25 24 21 22z" fill="#5059c9" /><path d="M9 10H23V20C23 29 12 29 11 22z" fill="#7b83eb" />
        <rect y="6" width="16" height="16" rx="1.500" fill="#4b53bc" /><path d="M4.500 10.500H11.500M8 10.500V18.500" stroke="#fff" strokeWidth="1.900" />
      </Svg>
      <div className="absolute -top-[7px] left-[16px] flex h-5 w-5 items-center justify-center rounded-full bg-[#c42b1c] text-[13px] text-white">1</div>
    </div> },
  { run: true, icon: <Svg w={28} h={27}>
      <rect width="28" height="27" rx="4" fill="#b30b00" />
      <path d="M13 5.500C11.500 9 14 16 22 18.500 23 16 14 15.500 6.500 20 6.500 22.500 13 15 14.500 7.500 14.500 5.500 13.500 4.500 13 5.500z" stroke="#fff" strokeWidth="1.500" />
    </Svg> },
  { run: true, icon: <Svg w={24} h={30}>
      <rect width="24" height="30" rx="2" fill="#68798a" /><rect x="3" y="3" width="18" height="6" fill="#35c5f2" />
      {[0, 1, 2].map((r) => [0, 1, 2].map((c) => <rect key={r * 3 + c} x={3 + c * 6.500} y={11 + r * 5.700} width="5" height="4.500" fill={c === 2 && r ? "#0c4a86" : "#d8dee4"} />))}
    </Svg> },
  { active: true, icon: <ExcelLogo w={30} h={30} /> },
];

function Taskbar() {
  return (
    <div className="flex h-[57px] shrink-0 bg-[#212222] text-[#eee]">
      <Svg w={23} h={31} className="mt-[14px] ml-[30px]">
        <path d="M2 0H15L23 8V29C23 30 22 31 21 31H2C1 31 0 30 0 29V2C0 1 1 0 2 0z" fill="#2fa4ee" /><path d="M15 0 23 8H17C16 8 15 7 15 6z" fill="#a8def8" />
        <path d="M3 11H8V19H3zM9.500 16H14V19H9.500zM15.500 14H20V19H15.500z" fill="#0b5cab" /><path d="M3 23H13M15 23H20M3 27.500H20" stroke="#e8f6ff" strokeWidth="2" />
      </Svg>
      <Svg w={29} h={29} className="mt-[15px] ml-[215px]">
        <defs><linearGradient id="win" gradientUnits="userSpaceOnUse" x1="0" y1="0" x2="29" y2="29"><stop stopColor="#80ecfc" /><stop offset="1" stopColor="#0a95f5" /></linearGradient></defs>
        <path d="M0 0H14V14H0zM15 0H29V14H15zM0 15H14V29H0zM15 15H29V29H15z" fill="url(#win)" />
      </Svg>
      <div className="mt-[9px] ml-[17px] flex h-[40px] w-[275px] items-center rounded-full border border-[#4a4a4a] border-t-[#5c5c5c] bg-[#3b3b3b]">
        <Svg w={19} h={20} className="ml-[14px]"><circle cx="8.500" cy="8.500" r="7" stroke="#ddd" strokeWidth="2" fill="#555" /><path d="M13.500 13.500 18 18.500" stroke="#ddd" strokeWidth="2.400" /></Svg>
        <Fit w={51} className="ml-[13px] pt-px text-[16.500px] text-[#c8c8c8]">Search</Fit>
        <div className="grow" />
        <Svg w={57} h={32} className="mr-[7px]">
          <path d="M0 27C10 18 45 16 57 25 52 32 8 33 0 27z" fill="#e8c9a0" /><path d="M0 27C12 32 45 31 57 25 52 33 8 34 0 27z" fill="#b98d60" />
          <path d="M6 13 26 9 29 24 9 29z" fill="#3c8f4c" /><path d="M6 11C10 8 14 8 16 11 18 8 22 7 25 8L28 22C24 21 21 22 19 25 16 23 13 24 10 26z" fill="#f2f2f2" /><path d="M16 11 19 25M9 14 14 13M10 18 15 17M18 12 24 10M19 16 25 14" stroke="#b5a8c8" />
          <path d="M28 3 30 6 23 17 21 18 21 15z" fill="#f2a33c" /><path d="M27 1 31 3 29 7 26 5z" fill="#e84a3c" />
          <path d="M36 26V11C36 1 53 1 53 11V26C53 28 36 28 36 26z" fill="#1578e8" /><path d="M39 11C40 5 49 5 50 11z" fill="#3cb0ff" /><path d="M38 18C39 13 50 13 51 18V24H38z" fill="#1a52d8" /><path d="M41 3C41 0 47 0 47 3" stroke="#3c98f0" strokeWidth="1.500" />
        </Svg>
      </div>
      <div className="ml-[2px] flex">
        {icons.map((x, i) => (
          <div key={i} className={"mt-[4px] flex h-[50px] w-[55px] shrink-0 flex-col items-center " + (x.active ? "mx-[2.500px] w-[50px]! rounded-[5px] border border-[#3a3a3a] bg-[#2f2f2f]" : "")}>
            <Box className={x.active ? "h-[46px]" : "h-[48px]"}>{x.icon}</Box>
            {x.run && <div className="-mt-[2px] h-[4px] w-[8px] shrink-0 rounded-full bg-[#9a9a9a]" />}
            {x.active && <div className="-mt-px h-[4px] w-5 shrink-0 rounded-full bg-[#1590f8]" />}
          </div>
        ))}
      </div>
      <div className="grow" />
      <div className="flex h-[57px] w-[368px] items-center">
        <Svg w={14} h={9} className="ml-[6px]"><path d="M1 8 7 1.500 13 8" stroke="#eee" strokeWidth="1.800" /></Svg>
        <Svg w={22} h={22} className="ml-[22px]">
          <path d="M2 9C3 2 15-1 19 6M19 1V6.500H14M3 20V14H8M3 14.500C5 18 8 20 11 20" stroke="#e0e0e0" strokeWidth="1.300" /><circle cx="16" cy="16" r="5" fill="#ff9800" />
        </Svg>
        <div className="ml-[21px] flex w-[30px] flex-col items-center pt-px text-[14px] leading-[20px]">
          <Fit w={29}>ENG</Fit><Fit w={18}>US</Fit>
        </div>
        <Svg w={20} h={16} className="ml-[23px]">
          <path d="M1 6C6 .500 14 .500 19 6M3.500 9C7 5 13 5 16.500 9M6.500 11.500C8.500 9 11.500 9 13.500 11.500" stroke="#eee" strokeWidth="1.400" /><circle cx="10" cy="13.500" r="1.700" fill="#eee" />
        </Svg>
        <Svg w={20} h={16} className="ml-[10px]">
          <path d="M1 5.500H4L8 1.500V14.500L4 10.500H1z" stroke="#eee" strokeWidth="1.300" /><path d="M11 5.500C12.500 7 12.500 9 11 10.500M13 3C16 6 16 10 13 13" stroke="#eee" strokeWidth="1.300" /><path d="M15.500 1C19.500 5 19.500 11 15.500 15" stroke="#777" strokeWidth="1.200" />
        </Svg>
        <Svg w={21} h={14} className="ml-[10px]">
          <rect x="1" y="1" width="16" height="12" rx="2.500" stroke="#eee" strokeWidth="1.500" /><rect x="3" y="3" width="6.500" height="8" fill="#eee" /><path d="M18.500 4.500C20.500 5 20.500 9 18.500 9.500z" fill="#eee" />
        </Svg>
        <div className="ml-[16px] flex w-[81px] flex-col items-end pt-px text-[14px] leading-[20px]">
          <Fit w={55}>1:04 AM</Fit><Fit w={77}>2024-09-07</Fit>
        </div>
        <Svg w={18} h={19} className="ml-[10px]">
          <path d="M9 1C5 1 3.500 4 3.500 7V10.500L1.500 14.500H16.500L14.500 10.500V7C14.500 4 13 1 9 1zM6.500 15C7 18.500 11 18.500 11.500 15" stroke="#eee" strokeWidth="1.400" />
        </Svg>
      </div>
    </div>
  );
}

export default function App() {
  return (
    <div className="flex h-[1078px] w-[1918px] flex-col overflow-hidden bg-[#161616] font-['Open_Sans','Noto_Sans',sans-serif] select-none">
      <TitleBar />
      <TabBar />
      <Ribbon />
      <FormulaBar />
      <Sheet />
      <SheetTabs />
      <StatusBar />
      <Taskbar />
    </div>
  );
}
